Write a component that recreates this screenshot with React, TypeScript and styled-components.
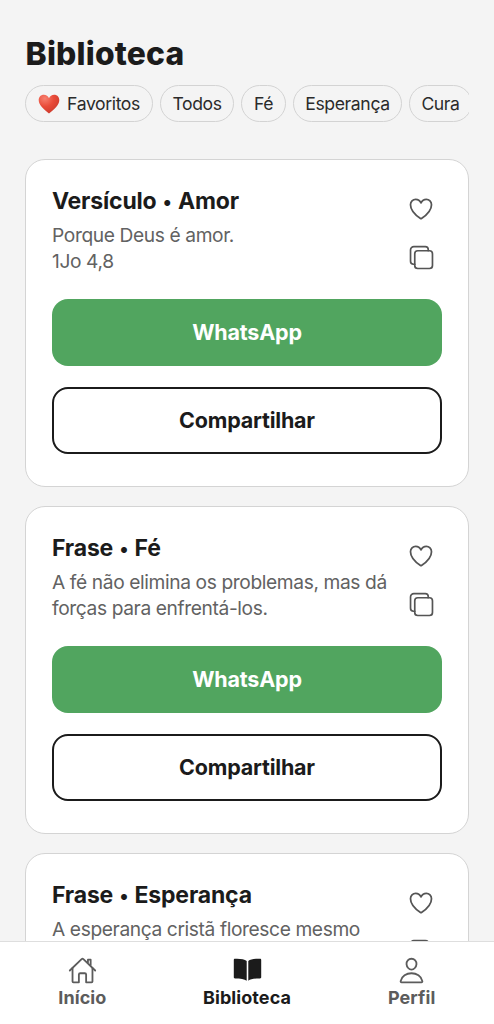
import React from "react";
import styled, { createGlobalStyle } from "styled-components";
import { IoHeartOutline, IoCopyOutline, IoHomeOutline, IoPersonOutline } from "react-icons/io5";

const GlobalStyle = createGlobalStyle`
  * { box-sizing: border-box; }
  html, body { margin: 0; background: #f4f4f4; }
  body { font-family: Inter, "Liberation Sans", sans-serif; color: #1b1b1b; }
  button { font-family: inherit; color: inherit; }
`;

const Screen = styled.div`
  height: 1024px;
  display: flex;
  flex-direction: column;
  overflow: hidden;
`;

const Content = styled.main`
  flex: 1;
  min-height: 0;
  overflow: hidden;
  padding: 33px 25px 0;
`;

const Heading = styled.h1`
  margin: 0;
  padding-left: 0.6px;
  font-size: 31.8px;
  line-height: 42px;
  font-weight: 800;
  letter-spacing: 0.18px;
`;

const Chips = styled.div`
  display: flex;
  gap: 7px;
  margin: 10px 0 37px;
  overflow: hidden;
`;

const Chip = styled.button<{ $width: number }>`
  flex: 0 0 ${(p) => p.$width}px;
  height: 37px;
  padding: 0;
  display: flex;
  align-items: center;
  justify-content: center;
  gap: 7px;
  border: 1px solid #d3d3d3;
  border-radius: 19px;
  background: transparent;
  font-size: 17.6px;
  letter-spacing: -0.38px;
  white-space: nowrap;
  color: #2b2b2b;
`;

const Card = styled.article`
  height: 328px;
  margin-bottom: 19px;
  padding: 25px 26px;
  border: 1px solid #d4d4d4;
  border-radius: 20px;
  background: #fff;
`;

const CardTop = styled.div`
  display: flex;
  justify-content: space-between;
  height: 114px;
`;

const CardTitle = styled.h2`
  margin: 0 0 4px;
  padding-top: 1px;
  font-size: 23px;
  line-height: 31px;
  font-weight: 700;
  letter-spacing: -0.18px;
`;

const Bullet = styled.span`
  margin: 0 1px;
  font-size: 19px;
  line-height: 1;
`;

const CardText = styled.p`
  margin: 0;
  padding-top: 0.6px;
  font-size: 19.2px;
  line-height: 26px;
  letter-spacing: -0.39px;
  color: #626262;
  white-space: pre-line;
`;

const Actions = styled.div`
  display: flex;
  flex-direction: column;
  align-items: center;
  gap: 21.3px;
  padding: 10px 7px 0 0;
  color: #555;
  svg { display: block; }
`;

const ActionButton = styled.button<{ $primary?: boolean }>`
  display: block;
  width: 100%;
  height: 67px;
  margin-bottom: 21px;
  padding: 0 0 1px;
  border: ${(p) => (p.$primary ? "0" : "2px solid #1b1b1b")};
  border-radius: 16px;
  background: ${(p) => (p.$primary ? "#51a55f" : "#fff")};
  color: ${(p) => (p.$primary ? "#fff" : "#1b1b1b")};
  font-size: 21.5px;
  font-weight: 650;
  letter-spacing: -0.2px;
`;

const TabBar = styled.nav`
  display: flex;
  height: 83px;
  border-top: 1px solid #dedede;
  background: #fff;
`;

const Tab = styled.div<{ $active?: boolean }>`
  flex: 1;
  display: flex;
  flex-direction: column;
  align-items: center;
  padding-top: 14px;
  font-size: 18px;
  line-height: 24px;
  font-weight: 700;
  letter-spacing: 0.08px;
  color: ${(p) => (p.$active ? "#1b1b1b" : "#5c5c5c")};
  svg { display: block; margin-bottom: 1px; }
`;

const BookIcon = () => (
  <svg width="29" height="29" viewBox="0 0 29 29" fill="currentColor" aria-hidden="true">
    <path d="M13.7 4.9C11.5 3.2 7 2.4 2 2.7C1.2 2.7.8 3.1.8 3.9V21.3C.8 22 1.2 22.4 2 22.4C7.5 22.4 11.5 22.9 13.7 24.8Z" />
    <path d="M15.3 4.9C17.5 3.2 22 2.4 27 2.7C27.8 2.7 28.2 3.1 28.2 3.9V21.3C28.2 22 27.8 22.4 27 22.4C21.5 22.4 17.5 22.9 15.3 24.8Z" />
  </svg>
);

const RedHeart = () => (
  <svg width="22" height="20" viewBox="0 0 22 20" aria-hidden="true">
    <defs>
      <radialGradient id="heart" cx="0.3" cy="0.2" r="0.85">
        <stop offset="0" stopColor="#f7806f" />
        <stop offset="0.5" stopColor="#e94b39" />
        <stop offset="1" stopColor="#cb3a2c" />
      </radialGradient>
    </defs>
    <path
      d="M11 19.6C9.2 17.6 6.3 15.8 3.8 12.9 1.8 10.6 0.7 8.5 0.7 6 0.7 2.9 2.9 0.7 5.8 0.7 8.2 0.7 10.1 2.1 11 4.2 11.9 2.1 13.8 0.7 16.2 0.7c2.9 0 5.1 2.2 5.1 5.3 0 2.5-1.1 4.6-3.1 6.9-2.5 2.9-5.4 4.7-7.2 6.7z"
      fill="url(#heart)"
    />
  </svg>
);

const chips = [
  { label: "Favoritos", width: 128, heart: true },
  { label: "Todos", width: 74 },
  { label: "Fé", width: 45 },
  { label: "Esperança", width: 109 },
  { label: "Cura", width: 63 },
];

const cards = [
  { kind: "Versículo", theme: "Amor", text: "Porque Deus é amor.\n1Jo 4,8", shareable: true },
  { kind: "Frase", theme: "Fé", text: "A fé não elimina os problemas, mas dá\nforças para enfrentá-los.", shareable: true },
  { kind: "Frase", theme: "Esperança", text: "A esperança cristã floresce mesmo", shareable: false },
];

export default function App() {
  return (
    <Screen>
      <GlobalStyle />
      <Content>
        <Heading>Biblioteca</Heading>
        <Chips>
          {chips.map((c) => (
            <Chip key={c.label} $width={c.width}>
              {c.heart && <RedHeart />}
              {c.label}
            </Chip>
          ))}
        </Chips>
        {cards.map((c) => (
          <Card key={c.theme}>
            <CardTop>
              <div>
                <CardTitle>{c.kind} <Bullet>•</Bullet> {c.theme}</CardTitle>
                <CardText>{c.text}</CardText>
              </div>
              <Actions>
                <IoHeartOutline size={28} />
                <IoCopyOutline size={27} />
              </Actions>
            </CardTop>
            {c.shareable && (
              <>
                <ActionButton $primary>WhatsApp</ActionButton>
                <ActionButton>Compartilhar</ActionButton>
              </>
            )}
          </Card>
        ))}
      </Content>
      <TabBar>
        <Tab><IoHomeOutline size={29} />Início</Tab>
        <Tab $active><BookIcon />Biblioteca</Tab>
        <Tab><IoPersonOutline size={29} />Perfil</Tab>
      </TabBar>
    </Screen>
  );
}
